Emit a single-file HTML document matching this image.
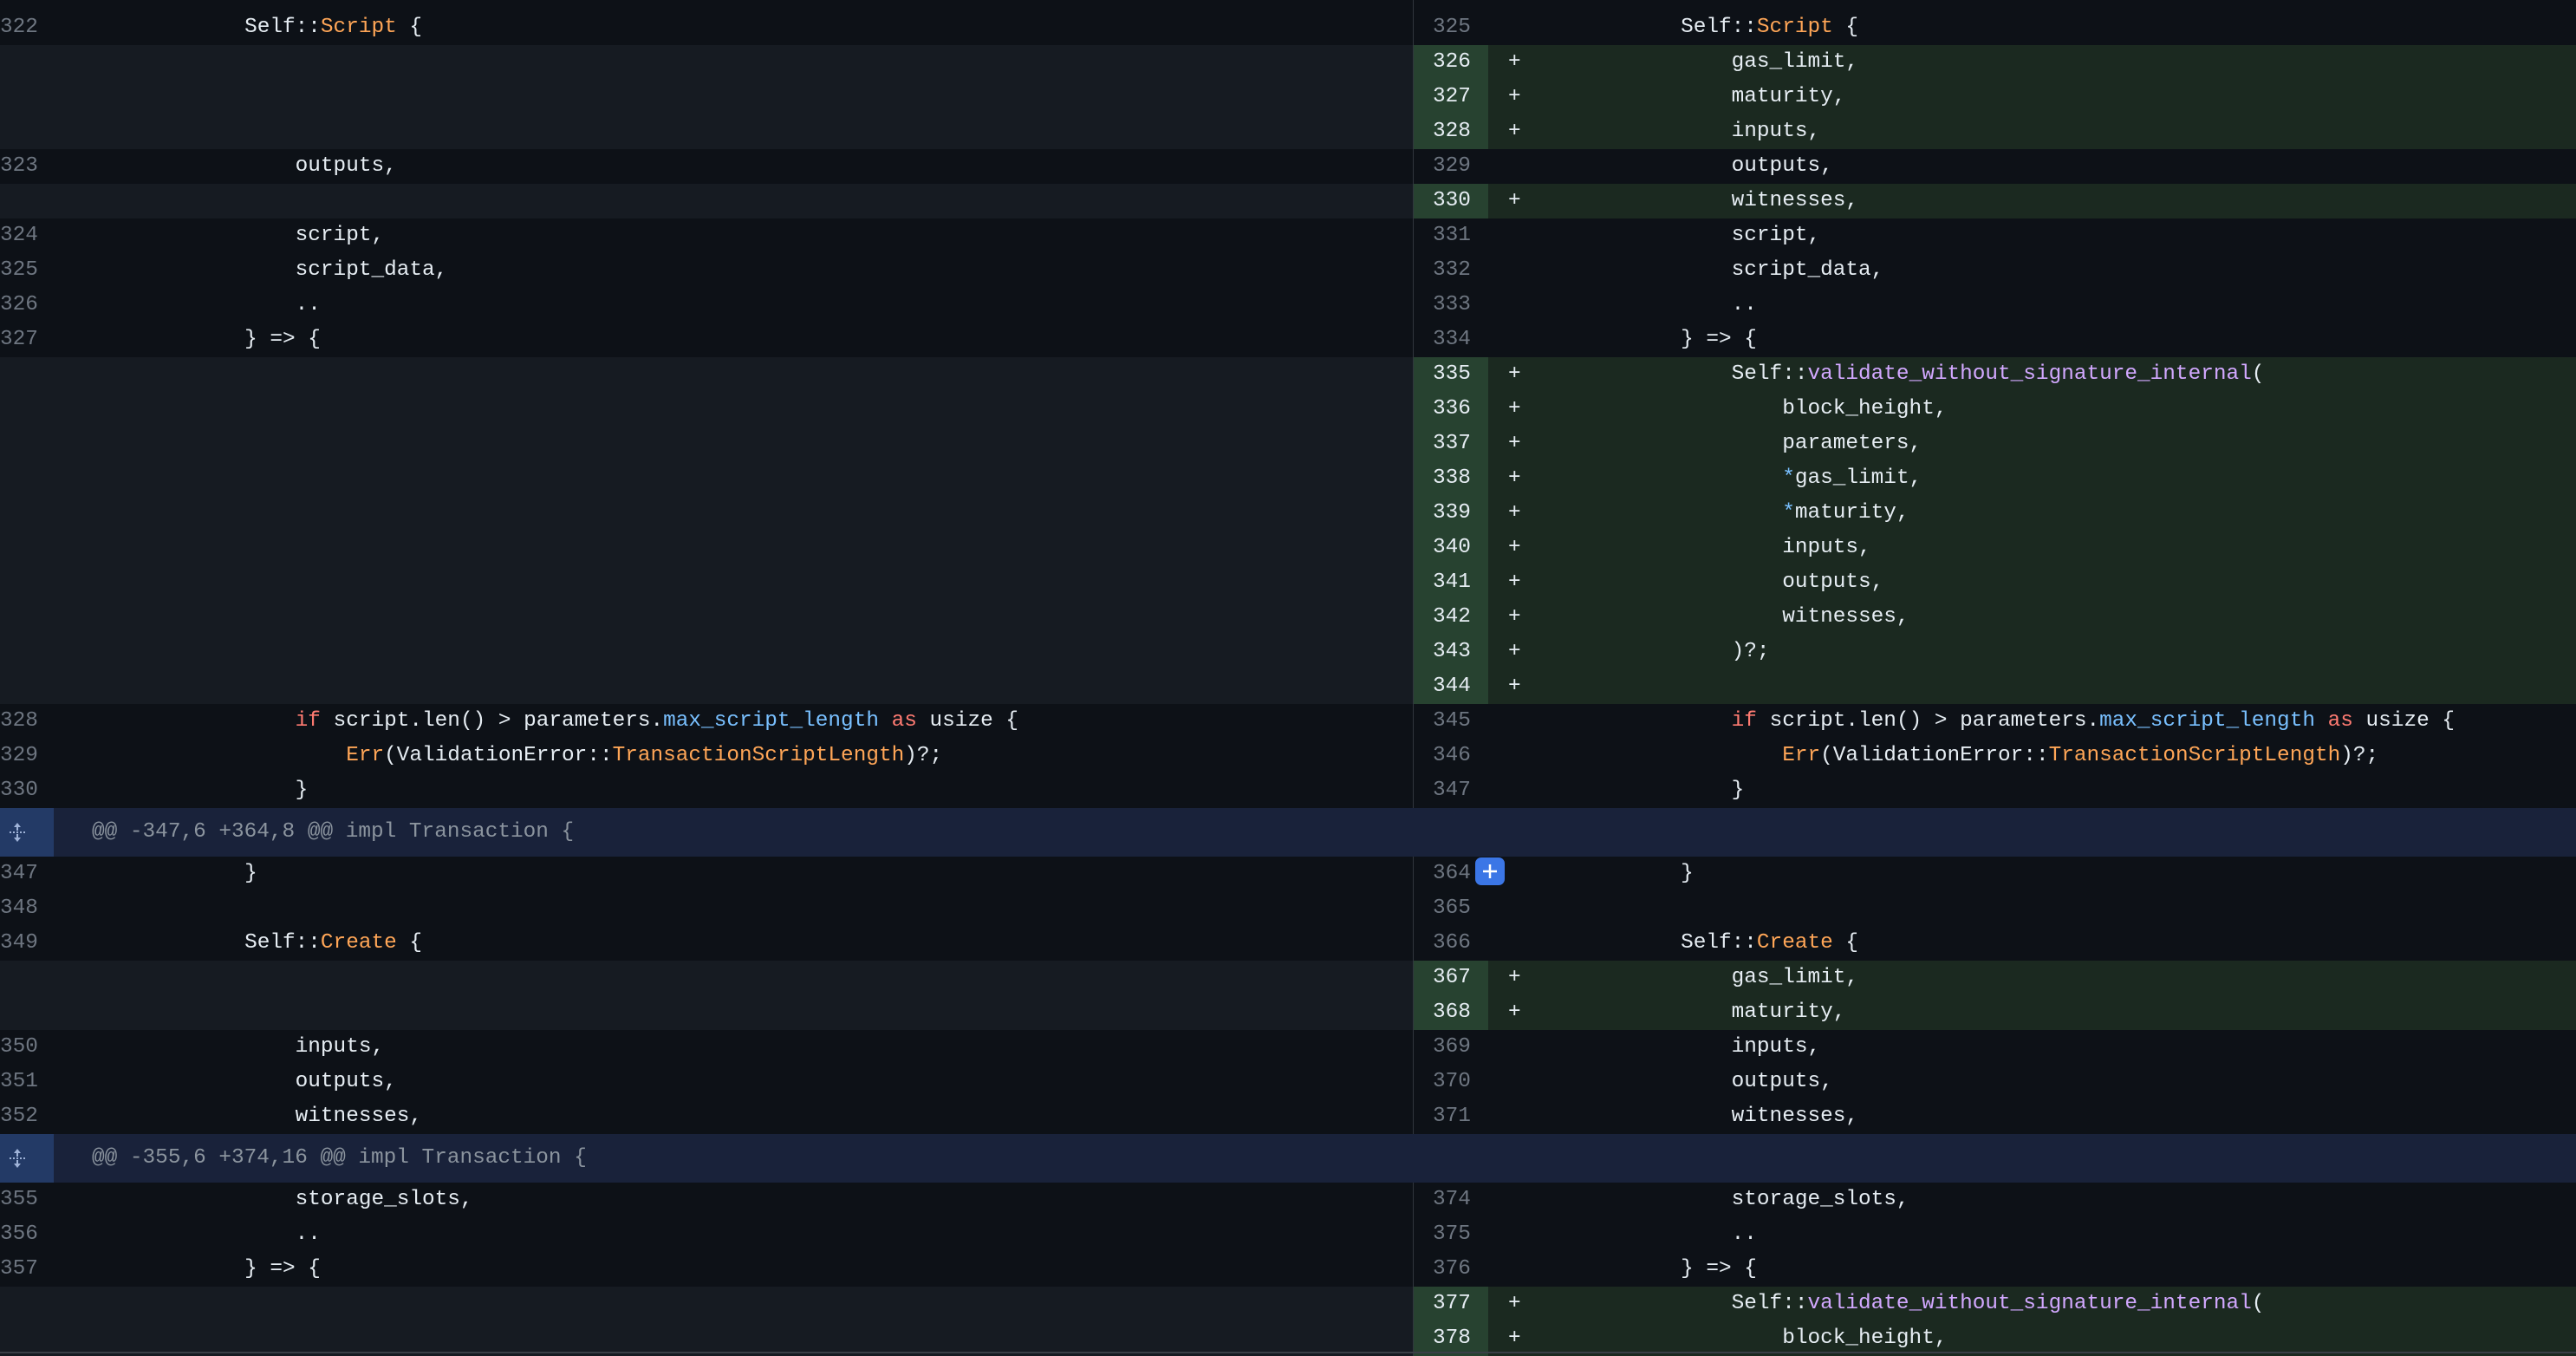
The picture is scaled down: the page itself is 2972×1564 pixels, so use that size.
<!DOCTYPE html>
<html><head><meta charset="utf-8"><style>
*{margin:0;padding:0;box-sizing:border-box}
body{width:2972px;height:1564px;background:#0d1117;overflow:hidden;position:relative;font-family:"Liberation Mono",monospace;font-size:24.4px;color:#e6edf3}
.row{position:absolute;left:0;width:2972px;height:40px;line-height:40px;white-space:pre}
.L{position:absolute;left:0;top:0;width:1630px;height:40px}
.R{position:absolute;left:1631px;top:0;right:0;height:40px}
.b{background:#161b22}
.a{background:#1b2920}
.n{position:absolute;top:0;color:#6e7681}
.L .n{left:0}
.R .n{left:0;width:86px;padding-left:22px;height:40px}
.a .n{background:#274230;color:#e6edf3}
.s{position:absolute;left:109px;top:0}
.L .c{position:absolute;left:165px;top:0}
.R .c{position:absolute;left:191px;top:0}
.o{color:#ffa657}.p{color:#d2a8ff}.bl{color:#79c0ff}.r{color:#ff7b72}
.div{position:absolute;left:1630px;width:1px;background:#30363d}
.h{position:absolute;left:0;width:2972px;height:56px;background:#19223a;line-height:56px;color:#8b949e;white-space:pre}
.h .ic{position:absolute;left:0;top:0;width:62px;height:56px;background:#233a66}
.h .t{position:absolute;left:106px;top:0}
.btn{position:absolute;left:71px;top:1px;width:34px;height:32px;background:#3b76e6;border-radius:7px}
</style></head><body>
<div class="div" style="top:0;height:932px"></div>
<div class="div" style="top:988px;height:320px"></div>
<div class="div" style="top:1364px;height:200px"></div>

<div class="row" style="top:-28px"><div class="L"></div><div class="R"></div></div>

<div class="row" style="top:12px"><div class="L"><span class="n">322</span><span class="c">        Self::<span class="o">Script</span> {</span></div><div class="R"><span class="n">325</span><span class="c">        Self::<span class="o">Script</span> {</span></div></div>
<div class="row" style="top:52px"><div class="L b"></div><div class="R a"><span class="n">326</span><span class="s">+</span><span class="c">            gas_limit,</span></div></div>
<div class="row" style="top:92px"><div class="L b"></div><div class="R a"><span class="n">327</span><span class="s">+</span><span class="c">            maturity,</span></div></div>
<div class="row" style="top:132px"><div class="L b"></div><div class="R a"><span class="n">328</span><span class="s">+</span><span class="c">            inputs,</span></div></div>
<div class="row" style="top:172px"><div class="L"><span class="n">323</span><span class="c">            outputs,</span></div><div class="R"><span class="n">329</span><span class="c">            outputs,</span></div></div>
<div class="row" style="top:212px"><div class="L b"></div><div class="R a"><span class="n">330</span><span class="s">+</span><span class="c">            witnesses,</span></div></div>
<div class="row" style="top:252px"><div class="L"><span class="n">324</span><span class="c">            script,</span></div><div class="R"><span class="n">331</span><span class="c">            script,</span></div></div>
<div class="row" style="top:292px"><div class="L"><span class="n">325</span><span class="c">            script_data,</span></div><div class="R"><span class="n">332</span><span class="c">            script_data,</span></div></div>
<div class="row" style="top:332px"><div class="L"><span class="n">326</span><span class="c">            ..</span></div><div class="R"><span class="n">333</span><span class="c">            ..</span></div></div>
<div class="row" style="top:372px"><div class="L"><span class="n">327</span><span class="c">        } =&gt; {</span></div><div class="R"><span class="n">334</span><span class="c">        } =&gt; {</span></div></div>
<div class="row" style="top:412px"><div class="L b"></div><div class="R a"><span class="n">335</span><span class="s">+</span><span class="c">            Self::<span class="p">validate_without_signature_internal</span>(</span></div></div>
<div class="row" style="top:452px"><div class="L b"></div><div class="R a"><span class="n">336</span><span class="s">+</span><span class="c">                block_height,</span></div></div>
<div class="row" style="top:492px"><div class="L b"></div><div class="R a"><span class="n">337</span><span class="s">+</span><span class="c">                parameters,</span></div></div>
<div class="row" style="top:532px"><div class="L b"></div><div class="R a"><span class="n">338</span><span class="s">+</span><span class="c">                <span class="bl">*</span>gas_limit,</span></div></div>
<div class="row" style="top:572px"><div class="L b"></div><div class="R a"><span class="n">339</span><span class="s">+</span><span class="c">                <span class="bl">*</span>maturity,</span></div></div>
<div class="row" style="top:612px"><div class="L b"></div><div class="R a"><span class="n">340</span><span class="s">+</span><span class="c">                inputs,</span></div></div>
<div class="row" style="top:652px"><div class="L b"></div><div class="R a"><span class="n">341</span><span class="s">+</span><span class="c">                outputs,</span></div></div>
<div class="row" style="top:692px"><div class="L b"></div><div class="R a"><span class="n">342</span><span class="s">+</span><span class="c">                witnesses,</span></div></div>
<div class="row" style="top:732px"><div class="L b"></div><div class="R a"><span class="n">343</span><span class="s">+</span><span class="c">            )?;</span></div></div>
<div class="row" style="top:772px"><div class="L b"></div><div class="R a"><span class="n">344</span><span class="s">+</span></div></div>
<div class="row" style="top:812px"><div class="L"><span class="n">328</span><span class="c">            <span class="r">if</span> script.len() &gt; parameters.<span class="bl">max_script_length</span> <span class="r">as</span> usize {</span></div><div class="R"><span class="n">345</span><span class="c">            <span class="r">if</span> script.len() &gt; parameters.<span class="bl">max_script_length</span> <span class="r">as</span> usize {</span></div></div>
<div class="row" style="top:852px"><div class="L"><span class="n">329</span><span class="c">                <span class="o">Err</span>(ValidationError::<span class="o">TransactionScriptLength</span>)?;</span></div><div class="R"><span class="n">346</span><span class="c">                <span class="o">Err</span>(ValidationError::<span class="o">TransactionScriptLength</span>)?;</span></div></div>
<div class="row" style="top:892px"><div class="L"><span class="n">330</span><span class="c">            }</span></div><div class="R"><span class="n">347</span><span class="c">            }</span></div></div>

<div class="h" style="top:932px"><div class="ic"><svg width="62" height="56" viewBox="0 0 62 56"><path d="M20 17 L16 22 H24 Z" fill="#9fb3d8"/><path d="M20 39 L16 34 H24 Z" fill="#9fb3d8"/><path d="M20 22V26M20 30V34" stroke="#9fb3d8" stroke-width="2"/><path d="M11 28H29" stroke="#9fb3d8" stroke-width="2" stroke-dasharray="2 2"/></svg></div><span class="t">@@ -347,6 +364,8 @@ impl Transaction {</span></div>

<div class="row" style="top:988px"><div class="L"><span class="n">347</span><span class="c">        }</span></div><div class="R"><span class="n">364</span><div class="btn"><svg width="34" height="32" viewBox="0 0 34 32"><path d="M17 8V24M9 16H25" stroke="#fff" stroke-width="2.5"/></svg></div><span class="c">        }</span></div></div>
<div class="row" style="top:1028px"><div class="L"><span class="n">348</span></div><div class="R"><span class="n">365</span></div></div>
<div class="row" style="top:1068px"><div class="L"><span class="n">349</span><span class="c">        Self::<span class="o">Create</span> {</span></div><div class="R"><span class="n">366</span><span class="c">        Self::<span class="o">Create</span> {</span></div></div>
<div class="row" style="top:1108px"><div class="L b"></div><div class="R a"><span class="n">367</span><span class="s">+</span><span class="c">            gas_limit,</span></div></div>
<div class="row" style="top:1148px"><div class="L b"></div><div class="R a"><span class="n">368</span><span class="s">+</span><span class="c">            maturity,</span></div></div>
<div class="row" style="top:1188px"><div class="L"><span class="n">350</span><span class="c">            inputs,</span></div><div class="R"><span class="n">369</span><span class="c">            inputs,</span></div></div>
<div class="row" style="top:1228px"><div class="L"><span class="n">351</span><span class="c">            outputs,</span></div><div class="R"><span class="n">370</span><span class="c">            outputs,</span></div></div>
<div class="row" style="top:1268px"><div class="L"><span class="n">352</span><span class="c">            witnesses,</span></div><div class="R"><span class="n">371</span><span class="c">            witnesses,</span></div></div>

<div class="h" style="top:1308px"><div class="ic"><svg width="62" height="56" viewBox="0 0 62 56"><path d="M20 17 L16 22 H24 Z" fill="#9fb3d8"/><path d="M20 39 L16 34 H24 Z" fill="#9fb3d8"/><path d="M20 22V26M20 30V34" stroke="#9fb3d8" stroke-width="2"/><path d="M11 28H29" stroke="#9fb3d8" stroke-width="2" stroke-dasharray="2 2"/></svg></div><span class="t">@@ -355,6 +374,16 @@ impl Transaction {</span></div>

<div class="row" style="top:1364px"><div class="L"><span class="n">355</span><span class="c">            storage_slots,</span></div><div class="R"><span class="n">374</span><span class="c">            storage_slots,</span></div></div>
<div class="row" style="top:1404px"><div class="L"><span class="n">356</span><span class="c">            ..</span></div><div class="R"><span class="n">375</span><span class="c">            ..</span></div></div>
<div class="row" style="top:1444px"><div class="L"><span class="n">357</span><span class="c">        } =&gt; {</span></div><div class="R"><span class="n">376</span><span class="c">        } =&gt; {</span></div></div>
<div class="row" style="top:1484px"><div class="L b"></div><div class="R a"><span class="n">377</span><span class="s">+</span><span class="c">            Self::<span class="p">validate_without_signature_internal</span>(</span></div></div>
<div class="row" style="top:1524px"><div class="L b"></div><div class="R a"><span class="n">378</span><span class="s">+</span><span class="c">                block_height,</span></div></div>
<div style="position:absolute;left:0;top:1559px;width:2972px;height:2px;background:#3a3f47"></div>
</body></html>
